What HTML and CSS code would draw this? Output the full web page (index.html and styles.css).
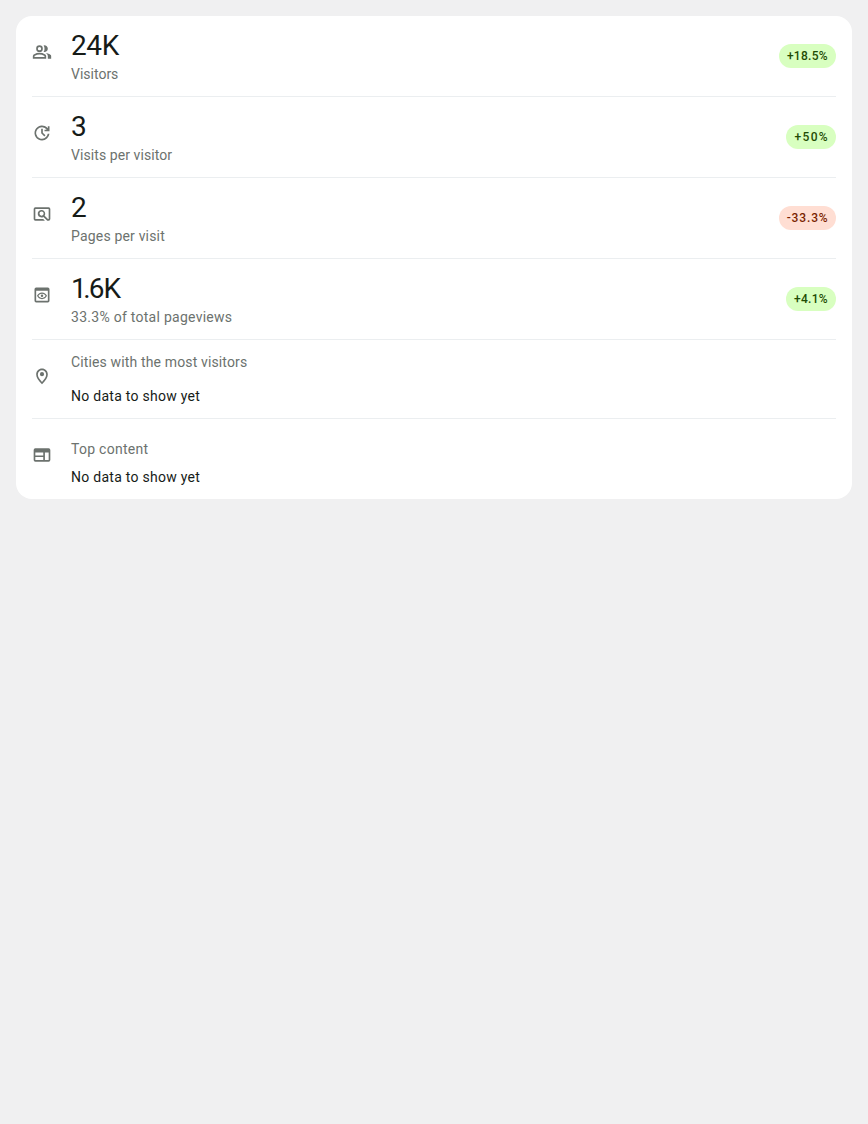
FILE: index.html
```html
<!DOCTYPE html>
<html lang="en">
<head>
<meta charset="utf-8">
<title>Site metrics</title>
<link rel="stylesheet" href="styles.css">
</head>
<body>
<main class="card">
  <section class="row">
    <svg class="icon" viewBox="0 0 24 24"><path fill-rule="evenodd" d="M1 20v-2.800c0-.6.15-1.100.45-1.600.3-.5.7-.85 1.150-1.050A14 14 0 0 1 9 13c2.300 0 4.400.5 6.400 1.550.45.2.85.55 1.150 1.050.3.5.45 1 .45 1.600V20H1zm18 0v-3c0-.75-.2-1.450-.6-2.100-.4-.65-1-1.250-1.750-1.750a14 14 0 0 1 4.600 1.450c.55.3 1 .65 1.300 1.050.3.4.45.85.45 1.350v3h-4zM9 12a4 4 0 1 1 0-8 4 4 0 0 1 0 8zm10-4a4 4 0 0 1-5.100 3.850A6 6 0 0 0 15 8a6 6 0 0 0-1.100-3.850A4 4 0 0 1 19 8zM3 18h12v-.8a1 1 0 0 0-.5-.85A12 12 0 0 0 9 15c-1.900 0-3.700.45-5.500 1.350a1 1 0 0 0-.5.85v.8zm6-8a2 2 0 1 0 0-4 2 2 0 0 0 0 4z"/></svg>
    <div class="body"><div class="value">24K</div><div class="label visitors">Visitors</div></div>
    <span class="badge up">+18.5%</span>
  </section>
  <section class="row">
    <svg class="icon" viewBox="0 0 24 24"><path d="M12 21a9 9 0 1 1 7-14.650V4h2v6h-6V8h2.750A7 7 0 1 0 18.900 13h2.050A9 9 0 0 1 12 21zm2.800-4.800L11 12.400V7h2v4.600l3.200 3.200-1.400 1.400z"/></svg>
    <div class="body"><div class="value">3</div><div class="label visits">Visits per visitor</div></div>
    <span class="badge up short">+50%</span>
  </section>
  <section class="row">
    <svg class="icon" viewBox="0 0 24 24"><path fill-rule="evenodd" d="M4 20a2 2 0 0 1-2-2V6a2 2 0 0 1 2-2h16a2 2 0 0 1 2 2v12a2 2 0 0 1-2 2h-1.700l-4.550-4.550A4.500 4.500 0 1 1 15.200 14l4 4H20V6H4v12h9.500l2 2H4zm7.500-6a2.500 2.500 0 1 0 0-5 2.500 2.500 0 0 0 0 5z"/></svg>
    <div class="body"><div class="value">2</div><div class="label pages">Pages per visit</div></div>
    <span class="badge down">-33.3%</span>
  </section>
  <section class="row">
    <svg class="icon" viewBox="0 0 24 24"><path fill-rule="evenodd" d="M5 21a2 2 0 0 1-2-2V5a2 2 0 0 1 2-2h14a2 2 0 0 1 2 2v14a2 2 0 0 1-2 2H5zm0-2h14V7H5v12zm7-2c-2.700 0-5-1.600-6-4 1-2.400 3.300-4 6-4s5 1.600 6 4c-1 2.400-3.300 4-6 4zm0-1.500c1.800 0 3.400-.9 4.300-2.500-.9-1.600-2.500-2.500-4.300-2.500S8.600 11.400 7.700 13c.9 1.600 2.500 2.500 4.300 2.500zm0-1a1.500 1.500 0 1 0 0-3 1.500 1.500 0 0 0 0 3z"/></svg>
    <div class="body"><div class="value decimal"><span class="one">1</span><span class="point">.</span>6K</div><div class="label views">33.3% of total pageviews</div></div>
    <span class="badge up">+4.1%</span>
  </section>
  <section class="row cities">
    <svg class="icon" viewBox="0 0 24 24"><path fill-rule="evenodd" d="M12 22c-4.700-4.900-7-8.200-7-11.800C5 5.900 8.200 3 12 3s7 2.900 7 7.200c0 3.600-2.300 6.900-7 11.800zm0-2.900c3.200-3.400 5-6.300 5-8.800C17 7.100 14.700 5 12 5s-5 2.100-5 5.300c0 2.500 1.800 5.400 5 8.800zM12 12.300a2.500 2.500 0 1 0 0-5 2.500 2.500 0 0 0 0 5z"/></svg>
    <div class="body"><div class="label places">Cities with the most visitors</div><div class="empty">No data to show yet</div></div>
  </section>
  <section class="row content">
    <svg class="icon" viewBox="0 0 24 24"><path fill-rule="evenodd" d="M4 20a2 2 0 0 1-2-2V6a2 2 0 0 1 2-2h16a2 2 0 0 1 2 2v12a2 2 0 0 1-2 2H4zm0-2h9.500v-3.500H4V18zm11.500 0H20V9h-4.500v9zM4 12.500h9.500V9H4v3.500z"/></svg>
    <div class="body"><div class="label">Top content</div><div class="empty">No data to show yet</div></div>
  </section>
</main>
</body>
</html>
```
FILE: styles.css
```css
* { box-sizing: border-box; }
body {
  margin: 0;
  padding: 16px;
  background: #f0f0f1;
  color: #161b18;
  font-family: Roboto, "Liberation Sans", sans-serif;
}
.card {
  padding: 0 16px;
  background: #fff;
  border-radius: 16px;
}
.row {
  display: flex;
  align-items: flex-start;
  height: 81px;
  border-bottom: 1px solid #ebeef0;
}
.icon {
  width: 20px;
  height: 20px;
  margin: 26px 19px 0 0;
  flex: none;
  fill: #6c726e;
}
.body { flex: 1; padding-top: 12px; }
.value {
  font-size: 28px;
  line-height: 36px;
  letter-spacing: -0.4px;
}
.decimal { letter-spacing: -0.8px; }
.one { letter-spacing: -3.500px; }
.point { letter-spacing: -2px; }
.label, .empty {
  font-size: 14px;
  line-height: 20px;
  letter-spacing: 0.27px;
  white-space: nowrap;
}
.label { color: #6c726e; }
.visitors { letter-spacing: 0; }
.visits { letter-spacing: 0.08px; }
.pages { letter-spacing: 0.18px; }
.places { letter-spacing: 0.14px; }
.badge {
  height: 24px;
  margin-top: 28px;
  padding: 0 8px;
  border-radius: 12px;
  font-size: 12px;
  font-weight: 500;
  line-height: 24px;
  letter-spacing: 0.3px;
}
.up { background: #d8ffc0; color: #1f4c04; }
.down { background: #ffded3; color: #7a1e00; letter-spacing: 0.85px; padding-right: 7.500px; }
.short { letter-spacing: 1.350px; padding-right: 7px; }
.cities { height: 79px; }
.cities .empty { margin-top: 14px; }
.content { height: 80px; border-bottom: 0; }
.content .body { padding-top: 20px; }
.content .empty { margin-top: 8px; }
```
